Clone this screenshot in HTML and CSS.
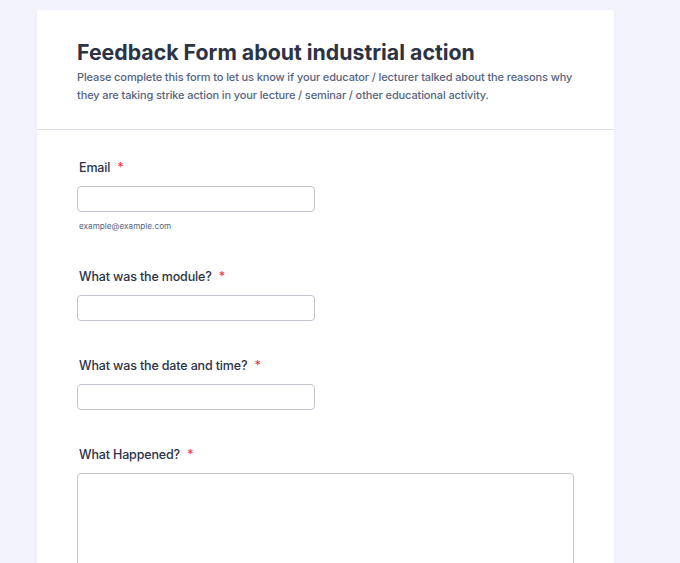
FILE: index.html
```html
<!DOCTYPE html>
<html lang="en">
<head>
<meta charset="utf-8">
<title>Feedback Form about industrial action</title>
<link rel="stylesheet" href="styles.css">
</head>
<body>
<main class="card">
  <header class="form-header">
    <h1 class="form-title">Feedback Form about industrial action</h1>
    <p class="form-desc">Please complete this form to let us know if your educator / lecturer talked about the reasons why they are taking strike action in your lecture / seminar / other educational activity.</p>
  </header>
  <form class="form-body">
    <div class="field">
      <label class="label" for="email">Email<span class="req">*</span></label>
      <input class="input" id="email" type="email">
      <div class="helper">example@example.com</div>
    </div>
    <div class="field">
      <label class="label" for="module">What was the module?<span class="req">*</span></label>
      <input class="input" id="module" type="text">
    </div>
    <div class="field">
      <label class="label" for="date">What was the date and time?<span class="req">*</span></label>
      <input class="input" id="date" type="text">
    </div>
    <div class="field">
      <label class="label" for="what">What Happened?<span class="req">*</span></label>
      <textarea class="textarea" id="what"></textarea>
    </div>
  </form>
</main>
</body>
</html>
```
FILE: styles.css
```css
* { box-sizing: border-box; }
html, body {
  margin: 0;
  padding: 0;
  background: #f3f3fe;
  font-family: Inter, "Noto Sans", "Liberation Sans", sans-serif;
  overflow: hidden;
}
.card {
  display: block;
  width: 577px;
  margin: 10px 0 0 37px;
  background: #ffffff;
  border-radius: 3px 3px 0 0;
  box-shadow: 0 2px 4px rgba(86, 70, 150, 0.06);
  min-height: 700px;
}
.form-header {
  padding: 28px 30px 25px 40px;
  border-bottom: 1px solid #dcdfe6;
}
.form-title {
  margin: 0;
  font-size: 21.3px;
  line-height: 28px;
  font-weight: 700;
  color: #2c3345;
}
.form-desc {
  margin: 2px 0 0 0;
  font-size: 11px;
  line-height: 18px;
  font-weight: 500;
  letter-spacing: -0.12px;
  color: #57647e;
}
.form-body {
  display: flex;
  flex-direction: column;
  gap: 35px;
  padding: 28px 40px 0 40px;
}
.field {
  display: flex;
  flex-direction: column;
  align-items: flex-start;
}
.label {
  font-size: 12.5px;
  line-height: 20px;
  font-weight: 500;
  letter-spacing: -0.15px;
  color: #2c3345;
  padding-left: 2px;
  margin-bottom: 8px;
}
.req {
  color: #f23a3c;
  margin-left: 7px;
}
.input {
  width: 238px;
  height: 26px;
  border: 1px solid #bfc4cf;
  border-radius: 4px;
  background: #fff;
  margin: 0;
}
.helper {
  margin-top: 8px;
  padding-left: 2px;
  font-size: 8.2px;
  line-height: 12px;
  color: #57647e;
}
.textarea {
  width: 497px;
  height: 160px;
  border: 1px solid #bfc4cf;
  border-radius: 4px;
  background: #fff;
  margin: 0;
  resize: none;
}
```
